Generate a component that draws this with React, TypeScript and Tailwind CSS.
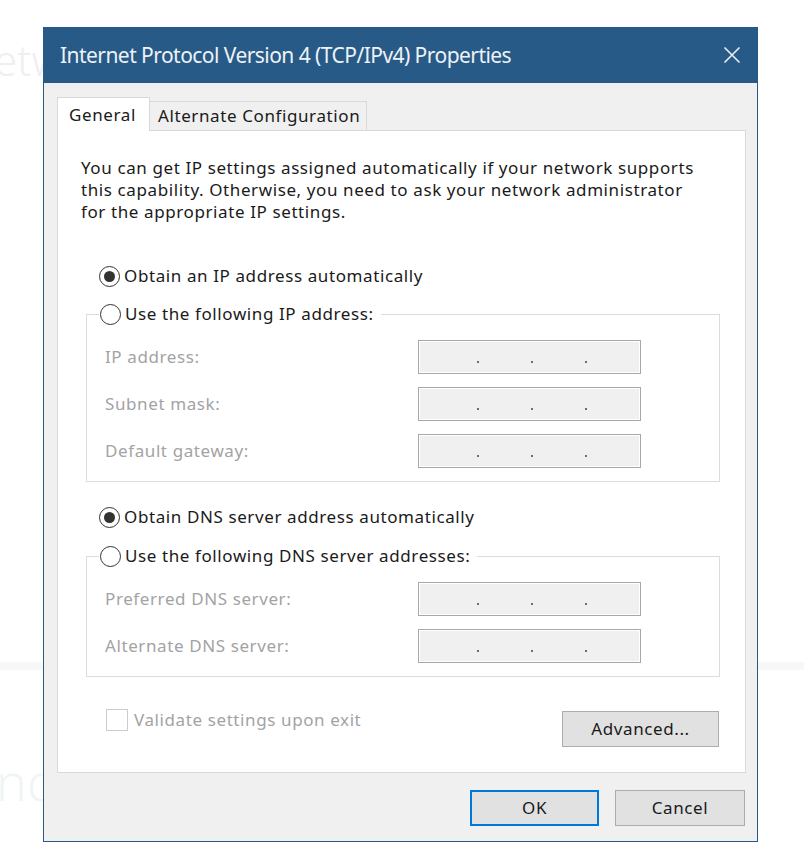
const FONT = "font-['Noto_Sans','Open_Sans',sans-serif]";
const TXT = "text-[17px] tracking-[0.6px]";

function Radio({ checked }: { checked?: boolean }) {
  return (
    <span className="flex h-[21px] w-[21px] shrink-0 items-center justify-center rounded-full border-[1.5px] border-[#333333] bg-white">
      {checked && <span className="h-[11px] w-[11px] rounded-full bg-[#333333]" />}
    </span>
  );
}

function RadioLabel({ checked, label }: { checked?: boolean; label: string }) {
  return (
    <span className={`flex h-[22px] items-center gap-[4px] ${TXT} text-[#1a1a1a]`}>
      <Radio checked={checked} />
      <span>{label}</span>
    </span>
  );
}

function IpBox() {
  return (
    <div className="flex h-[34px] w-[223px] items-end gap-[52px] border border-[#a8a8a8] bg-[#f0f0f0] pb-[10px] pl-[58px] shadow-[inset_0_0_0_1px_#ffffff]">
      <span className="h-[2px] w-[2px] bg-[#6d6d6d]" />
      <span className="h-[2px] w-[2px] bg-[#6d6d6d]" />
      <span className="h-[2px] w-[2px] bg-[#6d6d6d]" />
    </div>
  );
}

function FieldRow({ label }: { label: string }) {
  return (
    <div className="flex items-center justify-between">
      <span className={`${TXT} text-[#a3a3a3]`}>{label}</span>
      <IpBox />
    </div>
  );
}

function Group({ legend, fields }: { legend: string; fields: string[] }) {
  return (
    <fieldset className="ml-[5px] w-[634px] border border-[#dcdcdc] pl-[12px] pr-[78px] pb-[13px]">
      <legend className="pl-[1px] pr-[7px]">
        <RadioLabel label={legend} />
      </legend>
      <div className="mt-[15px] flex flex-col gap-[13px] pl-[6px]">
        {fields.map((f) => (
          <FieldRow key={f} label={f} />
        ))}
      </div>
    </fieldset>
  );
}

function Button({ label, primary }: { label: string; primary?: boolean }) {
  return (
    <button
      className={
        primary
          ? `flex h-[36px] w-[129px] items-center justify-center border-2 border-[#0078d7] bg-[#e1e1e1] ${TXT} text-[#1a1a1a]`
          : `flex h-[36px] w-[130px] items-center justify-center border border-[#adadad] bg-[#e1e1e1] ${TXT} text-[#1a1a1a]`
      }
    >
      {label}
    </button>
  );
}

export default function App() {
  return (
    <div className={`relative h-[867px] w-[804px] overflow-hidden bg-white ${FONT}`}>
      {/* faint page behind the dialog */}
      <div className="absolute left-[-6px] top-[28px] text-[42px] font-light text-[#efefef]">etw</div>
      <div className="absolute left-0 top-[662px] h-[8px] w-[804px] bg-[#f7f7f7]" />
      <div className="absolute left-[-4px] top-[742px] text-[52px] font-light text-[#eef5f2]">nd</div>

      <div className="relative pl-[43px] pt-[27px]">
        <div className="flex h-[815px] w-[715px] flex-col border border-[#2a5a84] bg-[#f0f0f0]">
          {/* title bar */}
          <div className="flex h-[55px] items-center justify-between bg-[#275a87] pl-[16px] pr-[16px]">
            <span className="text-[21px] tracking-[-0.55px] text-[#eef2f6]">
              Internet Protocol Version 4 (TCP/IPv4) Properties
            </span>
            <svg width="18" height="18" viewBox="0 0 18 18" className="mb-[2px]">
              <path d="M1.5 1.5 L16.5 16.5 M16.5 1.5 L1.5 16.5" stroke="#e8eef4" strokeWidth="1.6" />
            </svg>
          </div>

          {/* tabs */}
          <div className="mt-[14px] flex items-end pl-[13px]">
            <div className={`z-10 -mb-px flex h-[34px] w-[93px] items-center border border-b-0 border-[#d9d9d9] bg-white pl-[11px] ${TXT} text-[#1a1a1a]`}>
              General
            </div>
            <div className={`flex h-[29px] items-center border border-b-0 border-l-0 border-[#d9d9d9] bg-[#f0f0f0] pl-[8px] pr-[6px] ${TXT} text-[#1a1a1a]`}>
              Alternate Configuration
            </div>
          </div>

          {/* tab panel */}
          <div className="ml-[13px] flex h-[643px] w-[689px] flex-col border border-[#d9d9d9] bg-white px-[23px] pt-[26px]">
            <p className={`${TXT} leading-[22px] text-[#1a1a1a]`}>
              You can get IP settings assigned automatically if your network supports
              <br />
              this capability. Otherwise, you need to ask your network administrator
              <br />
              for the appropriate IP settings.
            </p>

            <div className="ml-[18px] mt-[42px]">
              <RadioLabel checked label="Obtain an IP address automatically" />
            </div>
            <div className="mt-[16px]">
              <Group legend="Use the following IP address:" fields={["IP address:", "Subnet mask:", "Default gateway:"]} />
            </div>

            <div className="ml-[18px] mt-[24px]">
              <RadioLabel checked label="Obtain DNS server address automatically" />
            </div>
            <div className="mt-[17px]">
              <Group legend="Use the following DNS server addresses:" fields={["Preferred DNS server:", "Alternate DNS server:"]} />
            </div>

            <div className="mt-[31px] flex items-start justify-between pr-[3px]">
              <div className="ml-[25px] flex h-[23px] items-center gap-[6px]">
                <span className="h-[22px] w-[22px] border border-[#cccccc] bg-white" />
                <span className={`${TXT} text-[#a3a3a3]`}>Validate settings upon exit</span>
              </div>
              <button className={`mt-[3px] flex h-[36px] w-[157px] items-center justify-center border border-[#adadad] bg-[#e1e1e1] ${TXT} text-[#1a1a1a]`}>
                Advanced...
              </button>
            </div>
          </div>

          {/* footer */}
          <div className="mt-[17px] flex justify-end gap-[16px] pr-[12px]">
            <Button primary label="OK" />
            <Button label="Cancel" />
          </div>
        </div>
      </div>
    </div>
  );
}
